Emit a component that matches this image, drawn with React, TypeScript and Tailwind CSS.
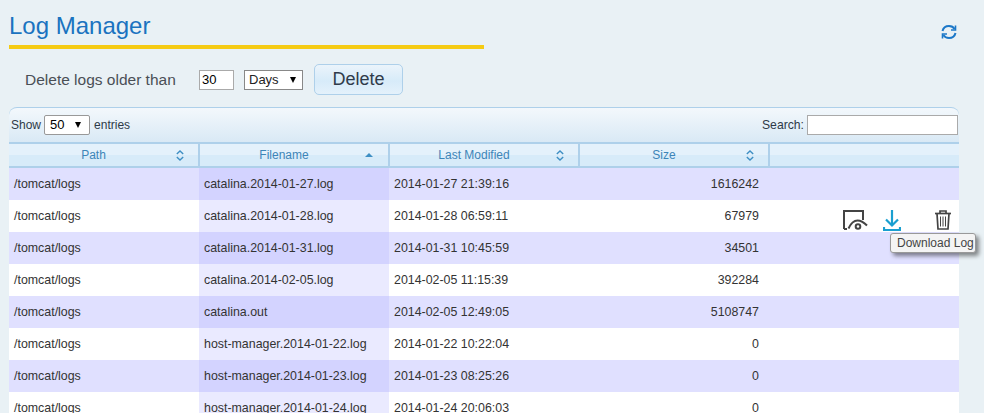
// App.tsx
import React from "react";

const rows = [
  ["/tomcat/logs", "catalina.2014-01-27.log", "2014-01-27 21:39:16", "1616242"],
  ["/tomcat/logs", "catalina.2014-01-28.log", "2014-01-28 06:59:11", "67979"],
  ["/tomcat/logs", "catalina.2014-01-31.log", "2014-01-31 10:45:59", "34501"],
  ["/tomcat/logs", "catalina.2014-02-05.log", "2014-02-05 11:15:39", "392284"],
  ["/tomcat/logs", "catalina.out", "2014-02-05 12:49:05", "5108747"],
  ["/tomcat/logs", "host-manager.2014-01-22.log", "2014-01-22 10:22:04", "0"],
  ["/tomcat/logs", "host-manager.2014-01-23.log", "2014-01-23 08:25:26", "0"],
  ["/tomcat/logs", "host-manager.2014-01-24.log", "2014-01-24 20:06:03", "0"],
];

const SortBoth = () => (
  <svg width="8" height="11" viewBox="0 0 8 11" fill="none" stroke="#3f8fc4" strokeWidth="1.4">
    <path d="M.8 4 4 1l3.200 3" />
    <path d="M.8 7 4 10l3.200-3" />
  </svg>
);

const SortAsc = () => (
  <svg width="8" height="4" viewBox="0 0 8 4">
    <path d="M0 4 4 0l4 4Z" fill="#3f8fc4" />
  </svg>
);

const Header = ({ label, sort, width }: { label?: string; sort?: "both" | "asc"; width: string }) => (
  <div className={`relative flex h-full items-center justify-center border-r-2 border-[#aed0ea] bg-[linear-gradient(#e4f1fb_50%,#d7ebf9_50%)] pr-[20px] text-[12px] text-[#3d85b8] last:border-r-0 ${width}`}>
    {label}
    {sort && (
      <span className={`absolute top-0 flex h-full items-center ${sort === "both" ? "right-[14px]" : "right-[15px]"}`}>
        {sort === "both" ? <SortBoth /> : <SortAsc />}
      </span>
    )}
  </div>
);

const RowActions = () => (
  <div className="flex h-full items-start pt-[9px] pl-[74px]">
    <svg className="mt-px" width="25" height="21" viewBox="0 0 25 21" fill="none" stroke="#444" strokeWidth="2">
      <path d="M1 19V1h19v9" />
      <path d="M1 19h3" />
      <path d="M5.500 18.500C8 13 11 10.500 14.500 10.500S21 12.500 24 15.500" />
      <circle cx="15" cy="16.500" r="2.300" />
    </svg>
    <svg className="ml-[15px]" width="18" height="22" viewBox="0 0 18 22" fill="none" stroke="#1a9fd0" strokeWidth="2.200">
      <path d="M9 1v15.500" />
      <path d="M3 10.500l6 6 6-6" />
      <path d="M1 18v3h16v-3" />
    </svg>
    <svg className="mt-px ml-[34px]" width="16" height="20" viewBox="0 0 16 20" fill="none" stroke="#444" strokeWidth="1.700">
      <path d="M0 3.500h16" />
      <path d="M5 3.500V1h6v2.500" />
      <path d="M2 3.500l1 15.500h10l1-15.500" />
      <path d="M5.500 6.500v10M8 6.500v10M10.500 6.500v10" strokeWidth="1" />
    </svg>
  </div>
);

export default function App() {
  return (
    <div className="relative h-[413px] w-[984px] overflow-hidden bg-[#e9f1f5] font-['Liberation_Sans',Arial,sans-serif] text-[#333]">
      <div className="flex items-start justify-between pr-[27px] pl-[9px]">
        <div className="w-[475px] border-b-4 border-[#f5cb13] pt-[10px] pb-[4px]">
          <h1 className="text-[24px] leading-[31px] text-[#1a73c0]">Log Manager</h1>
        </div>
        <svg className="mt-[24px]" width="16" height="16" viewBox="0 0 16 16" fill="none" stroke="#1c78c8" strokeWidth="2">
          <path d="M1.500 7C2.200 4 4.800 2 8 2c2.400 0 4.400 1 5.600 3" />
          <path d="M14.500 9c-.7 3-3.300 5-6.500 5-2.400 0-4.400-1-5.600-3" />
          <path d="M14.500 1.500V6H10" strokeWidth="1.600" />
          <path d="M1.500 14.500V10H6" strokeWidth="1.600" />
        </svg>
      </div>

      <div className="mt-[15px] flex h-[31px] items-center pl-[25px] text-[15.500px] text-[#4a4f55]">
        <span className="w-[151px] whitespace-nowrap">Delete logs older than</span>
        <input
          readOnly
          value="30"
          className="ml-[23px] h-[20px] w-[35px] border border-[#aaa] bg-white pl-[2px] text-[13px] text-black outline-none"
        />
        <div className="relative ml-[10px] flex h-[20px] w-[59px] items-center border border-[#888] bg-white pl-[4px] text-[13px] text-[#222]">
          Days
          <span className="absolute top-[6px] right-[6px] h-0 w-0 border-x-[3px] border-t-[6px] border-x-transparent border-t-black" />
        </div>
        <button className="ml-[11px] h-[31px] w-[89px] rounded-[5px] border border-[#aed0ea] bg-[linear-gradient(#ebf4fb,#d7ebf9_55%,#e4f1fb)] text-[18px] text-[#2f3b4a]">
          Delete
        </button>
      </div>

      <div className="mx-[9px] mt-[12px] w-[950px]">
        <div className="flex h-[35px] items-center justify-between rounded-t-[8px] border-t border-[#aed0ea] bg-[linear-gradient(#f3f8fc,#d9e9f5)] pr-px text-[12px] text-[#2e3a48]">
          <div className="flex items-center pl-[2px]">
            Show
            <div className="relative mr-[4px] ml-[3px] flex h-[20px] w-[46px] items-center rounded-[2px] border border-[#999] bg-white pl-[5px] text-[13px] text-black">
              50
              <span className="absolute top-[6px] right-[8px] h-0 w-0 border-x-[3px] border-t-[6px] border-x-transparent border-t-black" />
            </div>
            entries
          </div>
          <div className="flex items-center text-[12.200px]">
            Search:
            <input readOnly className="ml-[3px] h-[20px] w-[151px] border border-[#aaa] bg-white outline-none" />
          </div>
        </div>

        <div className="flex h-[26px] border-y-2 border-[#aed0ea]">
          <Header label="Path" sort="both" width="w-[191px]" />
          <Header label="Filename" sort="asc" width="w-[190px]" />
          <Header label="Last Modified" sort="both" width="w-[190px]" />
          <Header label="Size" sort="both" width="w-[190px]" />
          <Header width="w-[189px]" />
        </div>

        {rows.map((r, i) => (
          <div
            key={r[1]}
            className={`flex h-[32px] items-center text-[12.400px] text-[#333] ${i % 2 === 0 ? "bg-[#e0e0ff]" : "bg-white"}`}
          >
            <div className="w-[190px] pl-[5px]">{r[0]}</div>
            <div className={`flex h-full w-[190px] items-center pl-[5px] ${i % 2 === 0 ? "bg-[#d3d3ff]" : "bg-[#eaeaff]"}`}>{r[1]}</div>
            <div className="w-[190px] pl-[5px]">{r[2]}</div>
            <div className="w-[190px] pr-[10px] text-right">{r[3]}</div>
            <div className="h-full w-[190px]">{i === 1 && <RowActions />}</div>
          </div>
        ))}
      </div>

      <div className="absolute top-[233px] left-[890px] flex h-[20px] w-[86px] items-center rounded-[3px] border border-[#999] bg-[#f4f4f4] pl-[6px] text-[12px] whitespace-nowrap text-[#444] shadow-[3px_3px_4px_rgba(0,0,0,0.45)]">
        Download Log
      </div>
    </div>
  );
}
